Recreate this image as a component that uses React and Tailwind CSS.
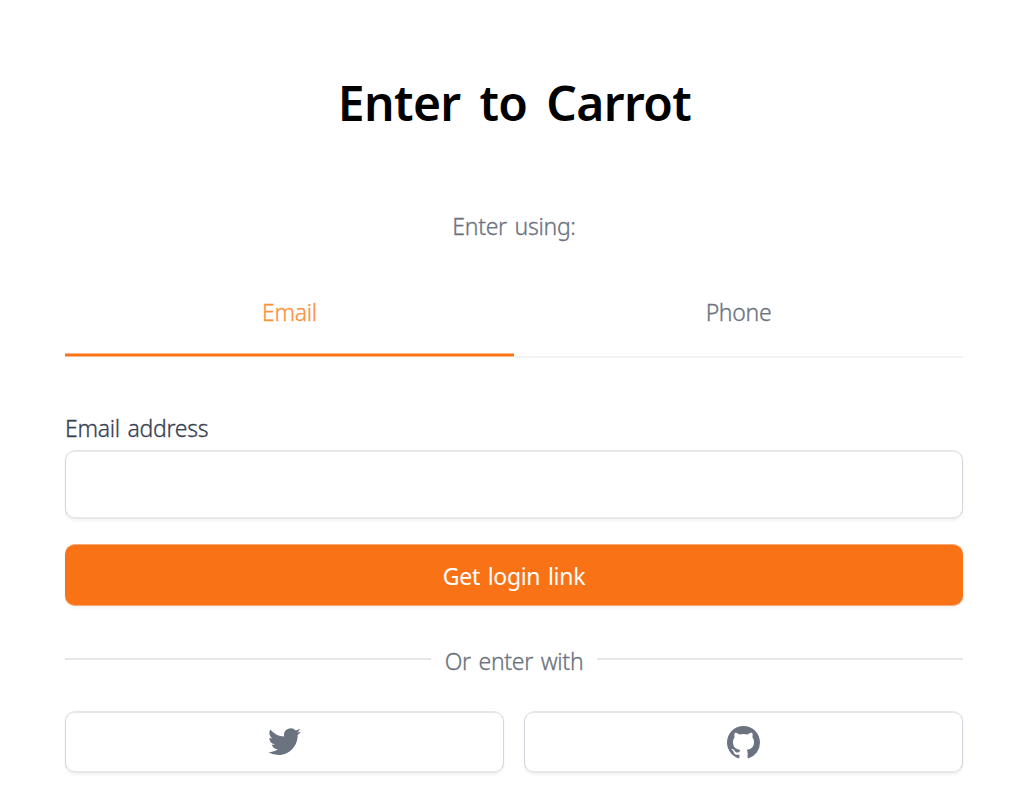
import React, { useState } from "react";
import clsx from "clsx";

const TABS = [
  { key: "email", label: "Email" },
  { key: "phone", label: "Phone" },
];

const BOX =
  "rounded-[10px] border-x border-y-2 border-x-gray-300 border-y-[#e6e7eb] bg-white shadow-[0_2px_3px_rgba(0,0,0,0.05)]";

function TwitterIcon() {
  return (
    <svg className="mb-px size-[33px]" fill="currentColor" viewBox="0 0 20 20" aria-hidden="true">
      <path d="M6.29 18.251c7.547 0 11.675-6.253 11.675-11.675 0-.178 0-.355-.012-.53A8.348 8.348 0 0020 3.92a8.19 8.19 0 01-2.357.646 4.118 4.118 0 001.804-2.27 8.224 8.224 0 01-2.605.996 4.107 4.107 0 00-6.993 3.743 11.65 11.65 0 01-8.457-4.287 4.106 4.106 0 001.27 5.477A4.073 4.073 0 01.8 7.713v.052a4.105 4.105 0 003.292 4.022 4.095 4.095 0 01-1.853.07 4.108 4.108 0 003.834 2.85A8.233 8.233 0 010 16.407a11.616 11.616 0 006.29 1.84" />
    </svg>
  );
}

function GithubIcon() {
  return (
    <svg className="size-[33px]" fill="currentColor" viewBox="0 0 20 20" aria-hidden="true">
      <path
        fillRule="evenodd"
        clipRule="evenodd"
        d="M10 0C4.477 0 0 4.484 0 10.017c0 4.425 2.865 8.18 6.839 9.504.5.092.682-.217.682-.483 0-.237-.008-.868-.013-1.703-2.782.605-3.369-1.343-3.369-1.343-.454-1.158-1.11-1.466-1.11-1.466-.908-.62.069-.608.069-.608 1.003.07 1.531 1.032 1.531 1.032.892 1.53 2.341 1.088 2.91.832.092-.647.35-1.088.636-1.338-2.22-.253-4.555-1.113-4.555-4.951 0-1.093.39-1.988 1.029-2.688-.103-.253-.446-1.272.098-2.65 0 0 .84-.27 2.75 1.026A9.564 9.564 0 0110 4.844c.85.004 1.705.115 2.504.337 1.909-1.296 2.747-1.027 2.747-1.027.546 1.379.203 2.398.1 2.651.64.7 1.028 1.595 1.028 2.688 0 3.848-2.339 4.695-4.566 4.942.359.31.678.921.678 1.856 0 1.338-.012 2.419-.012 2.747 0 .268.18.58.688.482A10.019 10.019 0 0020 10.017C20 4.484 15.522 0 10 0z"
      />
    </svg>
  );
}

export default function App() {
  const [method, setMethod] = useState("email");

  return (
    <div className="h-[799px] overflow-hidden bg-white pl-[65px] pt-[73px] pr-16 font-['Noto_Sans',sans-serif] text-[23px] leading-[30px] font-light tracking-[-0.3px] [word-spacing:2px] [-webkit-text-stroke:0.3px]">
      <h3 className="pl-px text-center text-[48px] leading-[60px] font-semibold tracking-[-0.6px] text-black [word-spacing:7px] [-webkit-text-stroke:0]">
        Enter to Carrot
      </h3>

      <h5 className="mt-[78px] text-center text-[#6b7280]">Enter using:</h5>

      <div className="mt-[56px] grid grid-cols-2">
        {TABS.map(({ key, label }) => (
          <button
            key={key}
            onClick={() => setMethod(key)}
            className={clsx(
              "flex h-[61px] flex-col justify-between",
              method === key ? "pb-px text-[#fb923c]" : "text-[#6b7280]"
            )}
          >
            <span className="w-full text-center">{label}</span>
            <span
              className={clsx(
                "w-full",
                method === key ? "h-1 border-y border-[#fcb88a] bg-[#f97316]" : "h-0.5 bg-[#f2f2f3]"
              )}
            />
          </button>
        ))}
      </div>

      <form className="mt-[55px]" onSubmit={(e) => e.preventDefault()}>
        <label htmlFor="login" className="block text-[#374151]">
          {method === "email" ? "Email address" : "Phone number"}
        </label>
        <input
          id="login"
          type={method === "email" ? "email" : "tel"}
          className={clsx(BOX, "mt-[7px] block h-[69px] w-full px-5 outline-none")}
        />
        <button className="mt-[25px] block h-[62px] w-full rounded-[10px] border-y border-[#fba974] bg-[#f97316] pt-0.5 font-normal tracking-[-0.3px] text-white shadow-[0_2px_3px_rgba(0,0,0,0.05)] [word-spacing:2px] [-webkit-text-stroke:0]">
          {method === "email" ? "Get login link" : "Get one-time password"}
        </button>
      </form>

      {/* divider */}
      <div className="mt-10 flex items-center">
        <span className="mb-[5px] h-0.5 flex-1 bg-[#e6e7eb]" />
        <span className="w-[166px] text-center text-[#6b7280]">Or enter with</span>
        <span className="mb-[5px] h-0.5 flex-1 bg-[#e6e7eb]" />
      </div>

      <div className="mt-[35px] grid grid-cols-2 gap-5 text-[#6b7280]">
        <button className={clsx(BOX, "flex h-[62px] items-center justify-center")}>
          <TwitterIcon />
        </button>
        <button className={clsx(BOX, "flex h-[62px] items-center justify-center")}>
          <GithubIcon />
        </button>
      </div>
    </div>
  );
}
